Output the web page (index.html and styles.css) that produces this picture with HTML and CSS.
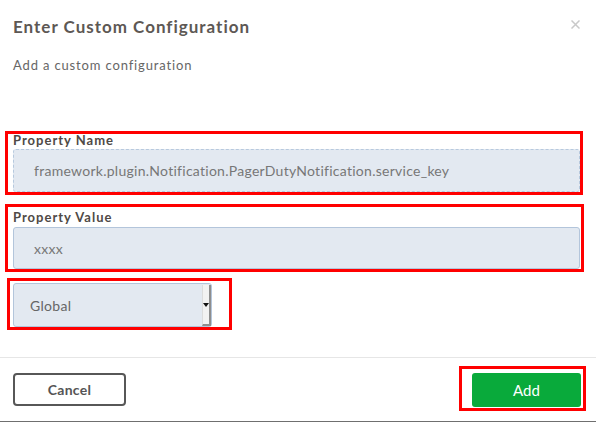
FILE: index.html
```html
<!DOCTYPE html>
<html>
<head>
<meta charset="utf-8">
<link rel="stylesheet" href="styles.css">
</head>
<body>
<div class="dialog">
  <header class="head">
    <h1 class="title">Enter Custom Configuration</h1>
    <span class="close" aria-label="Close"><svg width="9" height="9" viewBox="0 0 9 9"><path d="M0.5 0.5L8.5 8.5M8.5 0.5L0.5 8.5" stroke="#c9c9c9" stroke-width="1.5" fill="none"/></svg></span>
  </header>
  <p class="sub">Add a custom configuration</p>
  <div class="body">
    <div class="hl hl-name">
      <label class="lbl">Property Name</label>
      <div class="field field-dashed">framework.plugin.Notification.PagerDutyNotification.service_key</div>
    </div>
    <div class="hl hl-value">
      <label class="lbl">Property Value</label>
      <div class="field field-solid">xxxx</div>
    </div>
    <div class="hl hl-scope">
      <div class="select"><span class="sel-text">Global</span><span class="sel-arrow"><i class="tri"></i></span></div>
    </div>
  </div>
  <footer class="foot">
    <button class="btn-cancel">Cancel</button>
    <div class="hl hl-add"><button class="btn-add">Add</button></div>
  </footer>
</div>
</body>
</html>
```
FILE: styles.css
```css
* { box-sizing: border-box; }
html, body { margin: 0; padding: 0; background: #fff; }
body { font-family: Lato, "Open Sans", sans-serif; }
.dialog {
  width: 596px;
  height: 422px;
  border-bottom: 1px solid #6f6f6f;
  display: flex;
  flex-direction: column;
}
.head {
  display: flex;
  justify-content: space-between;
  align-items: flex-start;
  padding: 17px 16px 0 13px;
}
.title {
  margin: 0;
  font-size: 17px;
  line-height: 20px;
  font-weight: 700;
  letter-spacing: 1px;
  color: #5d5854;
}
.close { display: block; margin-top: 3px; line-height: 0; }
.sub {
  margin: 20px 0 0 13px;
  font-size: 13px;
  line-height: 16px;
  letter-spacing: 0.85px;
  color: #666;
}
.body {
  padding: 58px 12px 27px 5px;
  display: flex;
  flex-direction: column;
  align-items: flex-start;
}
.hl { border: 3px solid #f00; }
.hl-name { width: 578px; padding: 0 0 0 5px; }
.hl-value { width: 579px; padding: 4px 0 0 5px; margin-top: 9px; }
.hl-scope { width: 225px; padding: 2px 0 0 3px; margin: 6px 0 0 2px; }
.lbl {
  display: block;
  font-size: 13px;
  line-height: 12px;
  font-weight: 700;
  letter-spacing: 1px;
  color: #4f4a46;
  padding-bottom: 3px;
}
.hl-value .lbl { padding-bottom: 4px; }
.field {
  width: 567px;
  background: #e3e9f1;
  border-radius: 3px;
  color: #777;
  font-size: 14px;
  letter-spacing: 0.27px;
  display: flex;
  align-items: center;
  padding-left: 20px;
}
.field-dashed { height: 43px; border: 1px dashed #b7c9de; }
.field-solid { height: 42px; border: 1px solid #b3c5db; }
.select {
  width: 199px;
  height: 44px;
  background: #e3e9f1;
  border: 1px solid #b3c5db;
  border-radius: 3px;
  display: flex;
  align-items: stretch;
  color: #666;
  font-size: 14px;
  letter-spacing: 0.3px;
}
.sel-text { flex: 1; display: flex; align-items: center; padding-left: 16px; }
.sel-arrow {
  width: 9px;
  margin: 1px 0 0;
  background: #f2f2f2;
  border-left: 1px solid #dcdcdc;
  border-right: 2px solid #8e8e8e;
  border-bottom: 2px solid #8e8e8e;
  display: flex;
  align-items: center;
  justify-content: center;
}
.tri {
  display: block;
  width: 0;
  height: 0;
  border-left: 3px solid transparent;
  border-right: 3px solid transparent;
  border-top: 4px solid #111;
}
.foot {
  border-top: 1px solid #e6e6e6;
  display: flex;
  justify-content: space-between;
  align-items: flex-start;
  padding: 8px 10px 0 13px;
}
.btn-cancel {
  margin-top: 7px;
  width: 113px;
  height: 33px;
  border: 2px solid #575757;
  border-radius: 4px;
  background: #fff;
  color: #555;
  font-family: Lato, sans-serif;
  font-size: 14px;
  font-weight: 700;
  letter-spacing: 0.3px;
}
.hl-add { padding: 4px 2px 1px 10px; }
.btn-add {
  display: block;
  width: 109px;
  height: 34px;
  border: none;
  border-radius: 3px;
  background: #09aa3b;
  color: #fff;
  font-family: Lato, sans-serif;
  font-size: 15px;
  font-weight: 400;
}
```
